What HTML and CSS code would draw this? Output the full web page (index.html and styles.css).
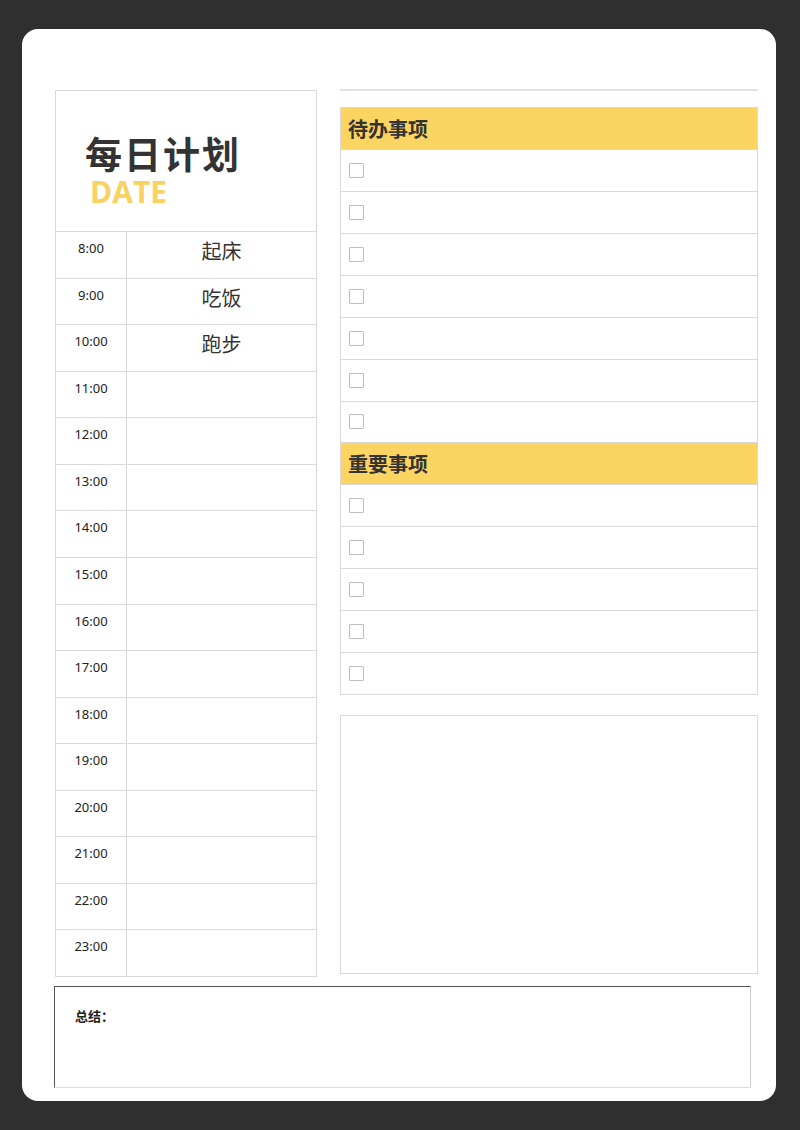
FILE: index.html
```html
<!DOCTYPE html>
<html lang="zh">
<head>
<meta charset="utf-8">
<link rel="stylesheet" href="styles.css">
</head>
<body>
<div class="card">
  <div class="main">
    <div class="schedule">
      <div class="sched-head">
        <div class="title">每日计划</div>
        <div class="date">DATE</div>
      </div>
      <div class="row"><div class="time">8:00</div><div class="task">起床</div></div>
      <div class="row"><div class="time">9:00</div><div class="task">吃饭</div></div>
      <div class="row"><div class="time">10:00</div><div class="task">跑步</div></div>
      <div class="row"><div class="time">11:00</div><div class="task"></div></div>
      <div class="row"><div class="time">12:00</div><div class="task"></div></div>
      <div class="row"><div class="time">13:00</div><div class="task"></div></div>
      <div class="row"><div class="time">14:00</div><div class="task"></div></div>
      <div class="row"><div class="time">15:00</div><div class="task"></div></div>
      <div class="row"><div class="time">16:00</div><div class="task"></div></div>
      <div class="row"><div class="time">17:00</div><div class="task"></div></div>
      <div class="row"><div class="time">18:00</div><div class="task"></div></div>
      <div class="row"><div class="time">19:00</div><div class="task"></div></div>
      <div class="row"><div class="time">20:00</div><div class="task"></div></div>
      <div class="row"><div class="time">21:00</div><div class="task"></div></div>
      <div class="row"><div class="time">22:00</div><div class="task"></div></div>
      <div class="row"><div class="time">23:00</div><div class="task"></div></div>
    </div>
    <div class="side">
      <div class="topline"></div>
      <div class="lists">
        <div class="list-head">待办事项</div>
        <div class="item"><span class="box"></span></div>
        <div class="item"><span class="box"></span></div>
        <div class="item"><span class="box"></span></div>
        <div class="item"><span class="box"></span></div>
        <div class="item"><span class="box"></span></div>
        <div class="item"><span class="box"></span></div>
        <div class="item"><span class="box"></span></div>
        <div class="list-head">重要事项</div>
        <div class="item"><span class="box"></span></div>
        <div class="item"><span class="box"></span></div>
        <div class="item"><span class="box"></span></div>
        <div class="item"><span class="box"></span></div>
        <div class="item"><span class="box"></span></div>
      </div>
      <div class="notes"></div>
    </div>
  </div>
  <div class="summary">总结：</div>
</div>
</body>
</html>
```

FILE: styles.css
```css
* { box-sizing: border-box; }
html, body { margin: 0; padding: 0; }
body {
  background: #2f2f2f;
  width: 800px;
  height: 1130px;
  padding: 29px 0 0 22px;
  font-family: "Noto Sans", "Noto Sans CJK SC", sans-serif;
  color: #333;
}
.card {
  width: 754px;
  height: 1072px;
  background: #fff;
  border-radius: 16px;
  padding: 60px 18px 0 32px;
}
.main {
  display: flex;
  gap: 23px;
  align-items: flex-start;
  padding-left: 1px;
}
.schedule {
  width: 262px;
  height: 887px;
  border: 1px solid #d9d9d9;
  display: flex;
  flex-direction: column;
  margin-top: 1px;
}
.sched-head {
  height: 141px;
  flex: 0 0 141px;
  padding: 42px 0 0 29px;
  border-bottom: 1px solid #d9d9d9;
}
.title {
  font-family: "Noto Sans CJK SC", sans-serif;
  font-weight: 700;
  font-size: 37px;
  line-height: 40px;
  color: #333;
  letter-spacing: 2px;
}
.date {
  font-family: "Open Sans", "Noto Sans", sans-serif;
  font-weight: 700;
  font-size: 30px;
  line-height: 32px;
  color: #f9d262;
  padding-left: 5px;
  margin-top: 3px;
}
.row {
  flex: 1;
  display: flex;
  border-bottom: 1px solid #d9d9d9;
}
.row:last-child { border-bottom: none; }
.time {
  width: 71px;
  border-right: 1px solid #d9d9d9;
  text-align: center;
  font-size: 13px;
  padding-top: 7px;
  color: #222;
}
.task {
  flex: 1;
  text-align: center;
  font-family: "Noto Sans CJK SC", sans-serif;
  font-size: 20px;
  line-height: 28px;
  padding-top: 5px;
  color: #333;
}
.side {
  width: 418px;
  display: flex;
  flex-direction: column;
}
.topline {
  height: 2px;
  border-top: 2px solid #e2e2e2;
}
.lists {
  margin-top: 16px;
  height: 588px;
  border: 1px solid #d9d9d9;
  display: flex;
  flex-direction: column;
}
.list-head {
  flex: 0 0 42px;
  height: 42px;
  background: #fcd462;
  border-bottom: 1px solid #d9d9d9;
  font-family: "Noto Sans CJK SC", sans-serif;
  font-weight: 700;
  font-size: 20px;
  line-height: 42px;
  padding-left: 7px;
  color: #333;
  overflow: hidden;
}
.item {
  flex: 1;
  display: flex;
  align-items: center;
  padding-left: 8px;
  border-bottom: 1px solid #d9d9d9;
}
.item:last-child { border-bottom: none; }
.box {
  width: 15px;
  height: 15px;
  border: 1.5px solid #bdbdbd;
  border-radius: 1px;
}
.notes {
  margin-top: 20px;
  height: 259px;
  border: 1px solid #d9d9d9;
}
.summary {
  margin-top: 9px;
  width: 697px;
  height: 102px;
  border-top: 1.5px solid #555;
  border-left: 1.5px solid #555;
  border-right: 1px solid #ccc;
  border-bottom: 1px solid #ddd;
  padding: 19px 0 0 20px;
  font-family: "Noto Sans CJK SC", sans-serif;
  font-weight: 700;
  font-size: 13px;
  color: #222;
}
```
